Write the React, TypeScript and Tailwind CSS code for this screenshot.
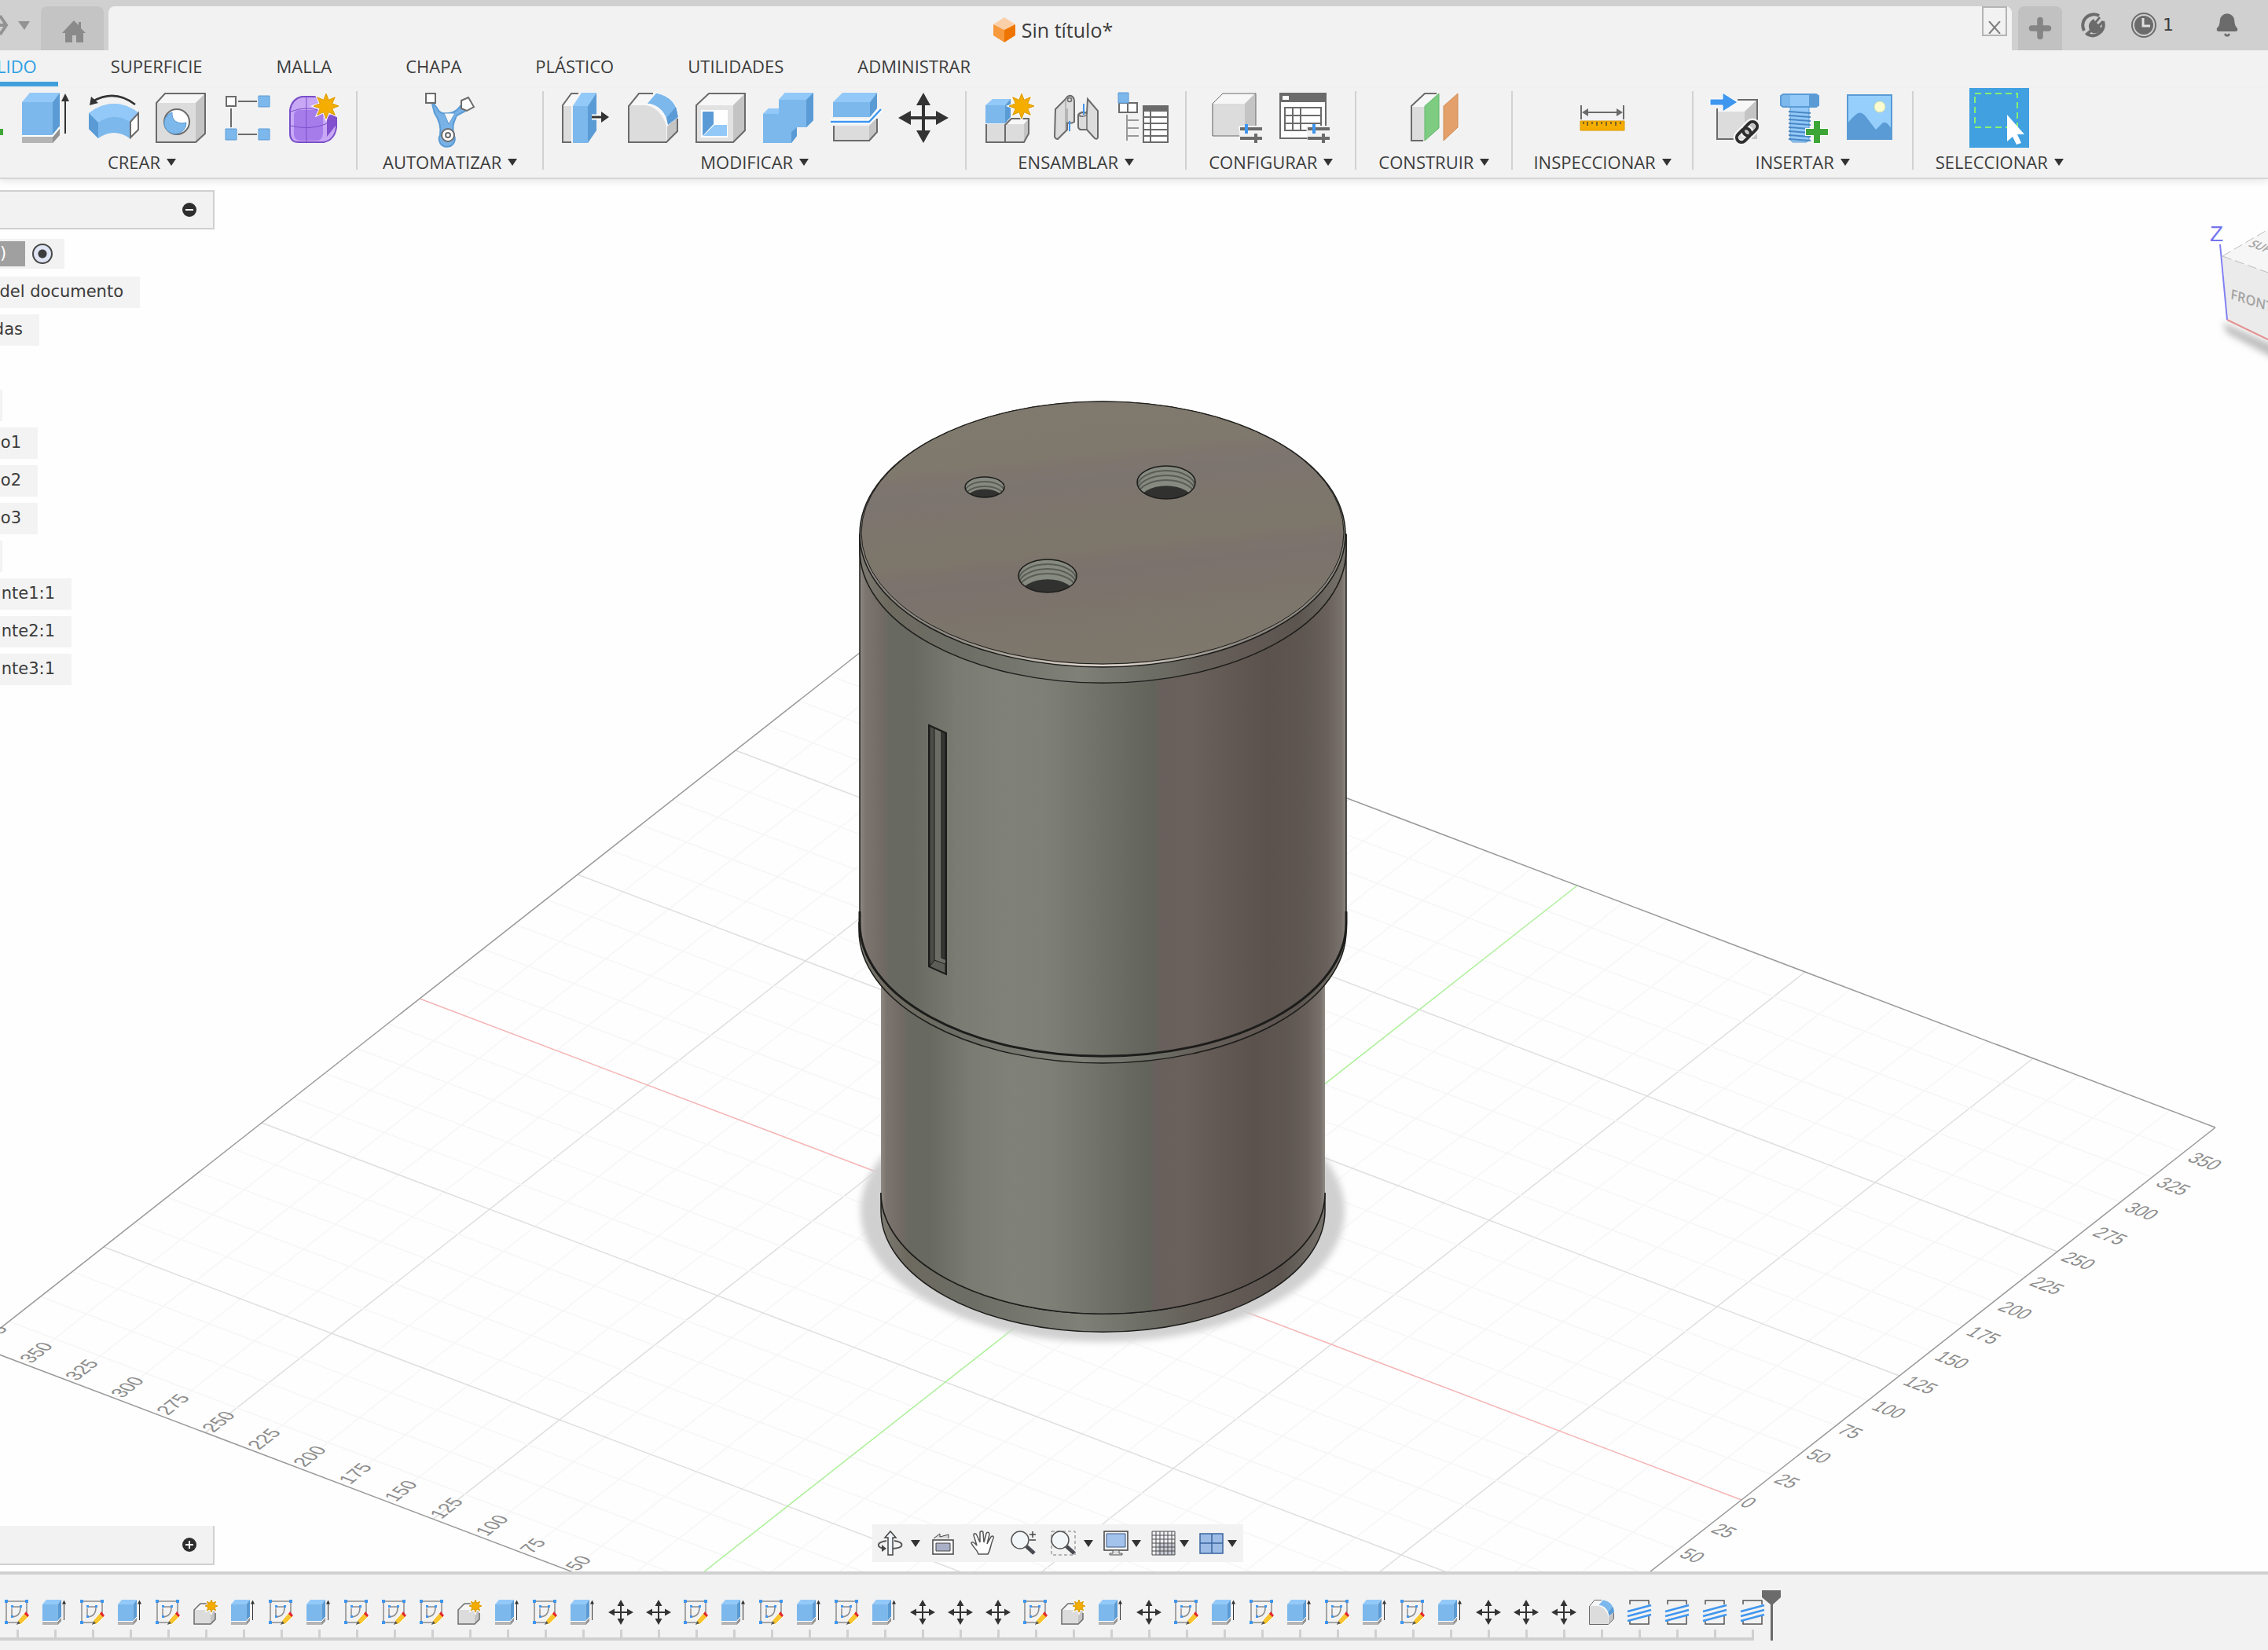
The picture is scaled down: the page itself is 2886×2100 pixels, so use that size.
import React from "react";
import { Bell, Plus } from "lucide-react";

type IconProps = { className?: string };

const BLUE = "#7cb8ec";
const BLUE_TOP = "#93c9f8";
const BLUE_SIDE = "#5a9bd5";
const LINE = "#6b6b6b";
const FACE = "#dcdcdc";
const FACE_TOP = "#f7f7f7";
const FACE_SIDE = "#c4c4c4";
const DARK = "#333333";

const starPoints = (cx: number, cy: number, outer: number, inner: number) =>
    Array.from({ length: 16 }, (_, i) => {
        const r = i % 2 === 0 ? outer : inner;
        const a = (Math.PI * i) / 8 - Math.PI / 2;
        return `${(cx + r * Math.cos(a)).toFixed(1)},${(cy + r * Math.sin(a)).toFixed(1)}`;
    }).join(" ");

const Svg: React.FC<IconProps & { size?: number; children: React.ReactNode }> = ({
    className = "h-16 w-16",
    size = 64,
    children
}) => (
    <svg className={`${className} shrink-0 overflow-visible`} viewBox={`0 0 ${size} ${size}`} fill="none" aria-hidden="true">
        {children}
    </svg>
);

const Star: React.FC<{ cx: number; cy: number; r?: number }> = ({ cx, cy, r = 16 }) => (
    <>
        <polygon points={starPoints(cx, cy, r, r * 0.52)} fill="#f5ad00" stroke="#f8f8f8" strokeWidth="3" />
        <polygon points={starPoints(cx, cy, r, r * 0.52)} fill="#f5ad00" stroke="#d99a00" strokeWidth="1" />
    </>
);

const ExtrudeIcon: React.FC<IconProps> = ({ className }) => (
    <Svg className={className}>
        <path d="M0 55h39l9-10v9l-9 10H0z" fill="#b5b5b5" />
        <path d="M39 55l9-10v9l-9 10z" fill="#929292" />
        <path d="M0 12h39v42H0z" fill={BLUE} />
        <path d="M0 12L10 0h38l-9 12z" fill={BLUE_TOP} />
        <path d="M39 12l9-12v43l-9 11z" fill={BLUE_SIDE} />
        <path d="M0 55h39l9-11" stroke="#fff" strokeWidth="2" />
        <path d="M55 8v44" stroke={DARK} strokeWidth="2" />
        <path d="M55 1l5 10H50z" fill={DARK} />
    </Svg>
);

const RevolveIcon = () => (
    <Svg>
        <path d="M0 26Q32 2 64 26L52 36v22Q32 44 12 58L0 46z" fill={BLUE} />
        <path d="M0 26Q32 2 64 26L52 37Q32 24 12 38z" fill={BLUE_TOP} />
        <path d="M0 26l12 12v20L0 46z" fill={BLUE_SIDE} />
        <path d="M53 37l10-11v21L53 57z" fill="#fff" stroke={LINE} strokeWidth="2" />
        <path d="M5 11Q33-5 59 15" stroke={DARK} strokeWidth="2.5" />
        <path d="M1 16L3 5l9 8z" fill={DARK} />
    </Svg>
);

const HoleIcon = () => (
    <Svg>
        <path d="M1 13L12 1h51v51L51 63H1z" fill={FACE} />
        <path d="M1 13L12 1h51L51 13z" fill={FACE_TOP} />
        <path d="M51 13L63 1v51L51 63z" fill={FACE_SIDE} />
        <path d="M1 13L12 1h51v51L51 63H1z" stroke={LINE} strokeWidth="2" />
        <circle cx="27" cy="37" r="16" fill="#fff" stroke={LINE} strokeWidth="2" />
        <path d="M21 25a14 14 0 1 0 18 13c-11 3-19-3-18-13z" fill={BLUE} stroke={BLUE_SIDE} />
    </Svg>
);

const PatternIcon = () => (
    <Svg>
        <path d="M20 11h24M11 20v24M20 53h24" stroke={LINE} strokeWidth="2" />
        <path d="M5 5h12v12H5z" fill="#fff" stroke={LINE} strokeWidth="2" />
        <path d="M46 4h14v14H46zM4 46h14v14H4zM46 46h14v14H46z" fill={BLUE} stroke={BLUE_SIDE} />
    </Svg>
);

const FormIcon = () => (
    <Svg>
        <path d="M1 22Q3 8 16 5h18L60 32v12Q58 60 44 63H12Q1 63 1 52z" fill="#c8a8f5" stroke="#7b4fc9" strokeWidth="2" />
        <path d="M6 28q1-6 7-6h23q7 0 7 6v24q-1 9-8 9H14q-8-1-8-8z" fill="#a67ceb" />
        <path d="M48 30l11-4v16l-11 14z" fill="#8350cf" />
        <path d="M22 6Q21 34 22 62M2 42q24 6 44-2l14-9M2 24q20-8 40 0" stroke="#7b4fc9" />
        <Star cx={47} cy={17} />
    </Svg>
);

const AutomateIcon = () => (
    <Svg>
        <path d="M8 10l6 8c2 3 3 7 8 8 10 2 18-2 22-8l8-8 6 8-8 6-10 5c-3 8-7 14-3 26a10 10 0 1 1-18-1c2-12-3-22-7-28z" fill="#78b2e6" stroke={BLUE_SIDE} strokeWidth="2" />
        <path d="M24 26h14l-8 14z" fill="#f7f7f7" stroke={BLUE_SIDE} />
        <path d="M1 1h12v12H1z" fill="#fff" stroke={LINE} strokeWidth="2" />
        <path d="M46 10l9-4 7 12-9 5-7-3z" fill="#fff" stroke={LINE} strokeWidth="2" />
        <circle cx="29" cy="54" r="8" fill="#fff" stroke={LINE} strokeWidth="2" />
        <circle cx="29" cy="54" r="3" stroke={LINE} strokeWidth="2" />
    </Svg>
);

const PressPullIcon = () => (
    <Svg>
        <path d="M3 16L14 1h12L15 16v47H3z" fill={FACE_TOP} />
        <path d="M3 17h11v46H3z" fill={FACE} />
        <path d="M14 63H3V16L14 1h9" stroke={LINE} strokeWidth="2" />
        <path d="M16 17h19v47H16z" fill={BLUE} />
        <path d="M16 17L27 0h19L35 17z" fill={BLUE_TOP} />
        <path d="M35 17L46 0v48L35 64z" fill={BLUE_SIDE} />
        <path d="M40 31h14" stroke="#fff" strokeWidth="7" />
        <path d="M40 31h16" stroke={DARK} strokeWidth="3" />
        <path d="M52 24l10 7-10 7z" fill={DARK} />
    </Svg>
);

const FilletIcon: React.FC<IconProps> = ({ className }) => (
    <Svg className={className}>
        <path d="M1 17L14 1h20l28 31v18L49 63H1z" fill={FACE_TOP} />
        <path d="M1 16h22c14 2 24 16 26 28v19H1z" fill={FACE} />
        <path d="M50 43l13-13v19L50 62z" fill={FACE_SIDE} />
        <path d="M32 1H14L1 17v46h48l14-14V33" stroke={LINE} strokeWidth="2" />
        <path d="M36 0q27 6 28 31L51 41Q46 16 24 14z" fill={BLUE} stroke="#fff" strokeWidth="1" />
        <path d="M61 18l3 13-13 10-2-9z" fill={BLUE_SIDE} />
    </Svg>
);

const ShellIcon = () => (
    <Svg>
        <path d="M1 16L17 1h46v47L48 63H1z" fill="#e2e2e2" />
        <path d="M1 16L17 1h46L48 16z" fill={FACE_TOP} />
        <path d="M48 16L63 1v47L48 63z" fill={FACE_SIDE} />
        <path d="M1 16L17 1h46v47L48 63H1z" stroke={LINE} strokeWidth="2" />
        <path d="M7 22h34v35H7z" fill="#fff" />
        <path d="M9 24h14v16L9 55z" fill={BLUE_SIDE} />
        <path d="M24 41h16v14H10z" fill={BLUE_TOP} />
    </Svg>
);

const CombineIcon = () => (
    <Svg>
        <path d="M0 27L7 20h13V9l8-9h36v35l-9 9H43v11l-7 9H0z" fill={BLUE} />
        <path d="M20 9l8-9h36l-9 9zM0 27l7-7h13v7z" fill={BLUE_TOP} />
        <path d="M55 9l9-9v35l-9 9zM36 50l7-6v11l-7 9z" fill={BLUE_SIDE} />
    </Svg>
);

const SplitIcon = () => (
    <Svg>
        <path d="M3 12h47v19H3z" fill={BLUE} />
        <path d="M3 12L15 0h44l-9 12z" fill={BLUE_TOP} />
        <path d="M50 12l9-12v20l-9 11z" fill={BLUE_SIDE} />
        <path d="M4 42h45l9-9v17l-9 11H4z" fill={FACE} />
        <path d="M49 42l9-9v17l-9 11z" fill={FACE_SIDE} />
        <path d="M4 42v19h45l10-11V33" stroke={LINE} strokeWidth="2" />
        <path d="M0 37h49l15-16" stroke="#fff" strokeWidth="6" />
        <path d="M0 37h49l15-16" stroke="#3f96ef" strokeWidth="2.5" />
    </Svg>
);

const MoveIcon: React.FC<IconProps> = ({ className }) => (
    <Svg className={className}>
        <path d="M32 10v44M10 32h44" stroke={DARK} strokeWidth="4" />
        <path d="M32 0l9 16H23zM32 64l9-16H23zM0 32l16-9v18zM64 32l-16-9v18z" fill={DARK} />
    </Svg>
);

const ComponentIcon = () => (
    <Svg>
        <path d="M4 40h48l6-7v19l-6 11H4z" fill={FACE} />
        <path d="M28 40l7-7h23l-6 7z" fill={FACE_TOP} />
        <path d="M52 40l6-7v19l-6 11z" fill={FACE_SIDE} />
        <path d="M4 40v23h48l6-11V33H36l-8 8v22" stroke={LINE} strokeWidth="2" />
        <path d="M3 16h25v23H3z" fill={BLUE} />
        <path d="M3 16l9-8h24l-8 8z" fill={BLUE_TOP} />
        <path d="M28 16l7-8v23l-7 8z" fill={BLUE_SIDE} />
        <Star cx={49} cy={17} />
    </Svg>
);

const JointIcon = () => (
    <Svg>
        <path d="M6 21L19 8q3-5 7-4 4 2 4 7v26q-4 3-9 1v9L9 59q-3 0-4-3z" fill={FACE} stroke={LINE} strokeWidth="2" />
        <path d="M19 9v38M21 38V20" stroke="#a8a8a8" strokeWidth="1.5" />
        <circle cx="24" cy="9" r="2.5" stroke={LINE} strokeWidth="1.5" />
        <path d="M47 8l13 15v34q-1 3-4 1L46 47H38q-3-1-3-4V28q4-5 11-2z" fill={FACE} stroke={LINE} strokeWidth="2" />
        <path d="M46 26v21M36 29q5 3 10-1" stroke={LINE} strokeWidth="1.5" />
        <path d="M24 36v13M42 14v14" stroke="#3f96ef" strokeWidth="2" />
    </Svg>
);

const BomIcon = () => (
    <Svg>
        <path d="M1 13h23v12H1zM12 13v12" fill="#fff" stroke={LINE} strokeWidth="2" />
        <path d="M0 0h13v13H0z" fill={BLUE} stroke={BLUE_SIDE} />
        <path d="M11 28v33M11 35h15M11 45h15M11 55h15" stroke="#999" strokeWidth="2" />
        <path d="M32 17h31v46H32z" fill="#fff" stroke={LINE} strokeWidth="2" />
        <path d="M31 16h33v8H31z" fill={LINE} />
        <path d="M41 24v39M32 31h31M32 39h31M32 47h31M32 55h31" stroke={LINE} strokeWidth="2" />
    </Svg>
);

const Sliders = () => (
    <>
        <path d="M34 42h30v22H36z" fill="#f2f2f2" />
        <path d="M36 46h28M36 58h28M56 52v12" stroke={LINE} strokeWidth="4" />
        <path d="M44 40v12" stroke="#3f96ef" strokeWidth="4" />
    </>
);

const ConfigureIcon = () => (
    <Svg>
        <path d="M0 14L14 0h42v42L42 55H0z" fill={FACE} />
        <path d="M0 14L14 0h42L42 14z" fill={FACE_TOP} />
        <path d="M42 14L56 0v55H42z" fill={FACE_SIDE} />
        <path d="M36 55H1V14L14 1h42v41" stroke={LINE} />
        <Sliders />
    </Svg>
);

const ConfigTableIcon = () => (
    <Svg>
        <path d="M1 1h58v57H1z" fill="#fff" stroke={LINE} strokeWidth="2" />
        <path d="M0 0h60v12H0z" fill={LINE} />
        <path d="M4 4h8v5H4z" fill="#fff" />
        <path d="M7 19h46v29H7zM17 19v29M27 19v29M7 29h46M7 39h46" stroke={LINE} strokeWidth="2" />
        <Sliders />
    </Svg>
);

const ConstructIcon = () => (
    <Svg>
        <path d="M3 18L20 1h16L20 18v42H3z" fill={FACE_TOP} />
        <path d="M3 18h17v43H3z" fill={FACE} />
        <path d="M18 61H3V17L20 1h15" stroke={LINE} strokeWidth="2" />
        <path d="M20 17L38 1v44L20 61z" fill="#7dcc82" stroke="#62b96a" />
        <path d="M44 17L62 1v43L44 61z" fill="#e3a06a" stroke="#cf8d58" />
    </Svg>
);

const MeasureIcon = () => (
    <Svg>
        <path d="M5 16v18M59 16v18M10 25h44" stroke={LINE} strokeWidth="2" />
        <path d="M6 25l8-5v10zM58 25l-8-5v10z" fill={LINE} />
        <path d="M4 36h56v12H4z" fill="#f5ad00" stroke="#d99a00" />
        <path d="M8 37v3M13 37v5M19 37v3M25 37v5M31 37v3M37 37v5M43 37v3M49 37v5M55 37v3" stroke="#7d6420" strokeWidth="2" />
    </Svg>
);

const InsertIcon = () => (
    <Svg>
        <path d="M9 24L24 9h36v36L44 59H9z" fill={FACE} />
        <path d="M9 24L24 9h36L44 24z" fill={FACE_TOP} />
        <path d="M44 24L60 9v50H44z" fill={FACE_SIDE} />
        <path d="M60 38V9H35M9 20v39h23" stroke={LINE} strokeWidth="2" />
        <path d="M0 8h16V0l19 12-19 12v-8H0z" fill="#3f96ef" stroke="#fff" />
        <g transform="rotate(-45 47 50)">
            <path d="M30 50a7 7 0 0 1 7-7h8a7 7 0 0 1 0 14h-8a7 7 0 0 1-7-7zM42 50a7 7 0 0 1 7-7h8a7 7 0 0 1 0 14h-8a7 7 0 0 1-7-7z" stroke="#f2f2f2" strokeWidth="7" />
            <path d="M31 50a6 6 0 0 1 6-6h8a6 6 0 0 1 0 12h-8a6 6 0 0 1-6-6zM43 50a6 6 0 0 1 6-6h8a6 6 0 0 1 0 12h-8a6 6 0 0 1-6-6z" stroke="#2d2d2d" strokeWidth="4" />
        </g>
    </Svg>
);

const BoltIcon = () => (
    <Svg>
        <path d="M16 18h24v42l-3 3H19l-3-3z" fill={BLUE_TOP} stroke={BLUE_SIDE} />
        <path d="M4 4l3-2h42l3 2v12l-3 2H7l-3-2z" fill={BLUE} stroke={BLUE_SIDE} strokeWidth="2" />
        <path d="M16 3h24v14H16z" fill={BLUE_TOP} />
        <path d="M40 3h9l3 2v11l-3 1h-9z" fill={BLUE_SIDE} />
        {[24, 29, 34, 39, 44, 49, 54, 59].map((y) => (
            <path key={y} d={`M14 ${y}l28 2`} stroke="#4887c4" strokeWidth="2" />
        ))}
        <path d="M45 35h10v10h10v10H55v10H45V55H35V45h10z" fill="#fff" />
        <path d="M46 36h8v10h10v8H54v10h-8V54H36v-8h10z" fill="#3da637" />
    </Svg>
);

const ImageIcon = () => (
    <Svg>
        <path d="M2 2h58v58H2z" fill="#96cffc" />
        <path d="M2 40q8-10 14-14c5-2 9 2 13 8l10 13 8-8c4-3 7 0 13 8v13H2z" fill={BLUE_SIDE} />
        <circle cx="44" cy="18" r="7" fill="#fdfcd0" stroke="#c9dcae" />
        <path d="M3 3h56v56H3z" stroke={BLUE_SIDE} strokeWidth="2" />
    </Svg>
);

const SelectIcon = () => (
    <Svg>
        <path d="M1 1h54v43H1z" stroke="#86f072" strokeWidth="2" strokeDasharray="8 5" />
        <path d="M42 28v34l7-6 5 10 6-2-5-11h9z" fill="#fff" />
    </Svg>
);

const SketchIcon: React.FC<IconProps> = ({ className }) => (
    <Svg className={className} size={32}>
        <path d="M4 2h22M4 29h14M2 4v24M28 4v13" stroke="#8c8c8c" strokeWidth="1.5" />
        <path d="M10 9h10M9 11v10M20 10q0 11-10 12" stroke="#8c8c8c" strokeWidth="1.5" />
        <path d="M0 0h4v4H0zM26 0h4v4h-4zM0 27h4v4H0zM8 7h3v3H8zM19 7h3v3h-3zM8 20h3v3H8z" fill="#3f96ef" />
        <path d="M26 16l5 5-10 10-5 1 1-6z" fill="#f8c530" stroke="#fff" />
        <path d="M27 15l4 5-2 2-4-4z" fill="#e2262f" />
        <path d="M17 27l3 3-5 2z" fill="#555" />
    </Svg>
);

const BodyIcon: React.FC<IconProps> = ({ className }) => (
    <Svg className={className} size={32}>
        <path d="M1 13l8-8h15l4 6v14l-6 6H1z" fill={FACE_TOP} />
        <path d="M1 13h21v18H1z" fill={FACE} />
        <path d="M22 13l6-4v16l-6 6z" fill={FACE_SIDE} />
        <path d="M18 5H9l-8 8v18h21l6-6v-8" stroke={LINE} strokeWidth="1.5" />
        <Star cx={23} cy={8} r={8} />
    </Svg>
);

const ThreadIcon: React.FC<IconProps> = ({ className }) => (
    <Svg className={className} size={32}>
        <path d="M4 6V1h24v5M4 27v4h24V19" stroke="#555" strokeWidth="1.5" />
        <path d="M1 15L31 7M1 21l30-8M1 27l30-8" stroke="#3f96ef" strokeWidth="2.5" />
    </Svg>
);

const Caret: React.FC<IconProps> = ({ className = "h-[9px] w-3" }) => (
    <svg className={`${className} shrink-0`} viewBox="0 0 12 9" fill={DARK} aria-hidden="true">
        <path d="M0 0h12L6 9z" />
    </svg>
);

const TabStrip = () => (
    <header className="flex h-16 items-stretch bg-[#d0d0d0] pt-2">
        <div className="flex w-[52px] items-center gap-3 pb-2">
            <svg className="h-7 w-[11px]" viewBox="0 0 11 28" fill="none" stroke="#939393" strokeWidth="4" aria-hidden="true">
                <path d="M0 2l8 12-8 12M0 14h7" />
            </svg>
            <svg className="h-[11px] w-[15px]" viewBox="0 0 15 11" fill="#929292" aria-hidden="true">
                <path d="M0 0h15L8 11z" />
            </svg>
        </div>
        <button aria-label="Inicio" className="mr-1.5 flex w-20 items-center justify-center rounded-t-lg bg-[#c4c4c4] pt-2 pl-1">
            <svg className="h-7 w-[30px]" viewBox="0 0 30 28" fill="#8a8a8a" aria-hidden="true">
                <path d="M15 0l6 6V2h3v8l6 6h-3v12h-9v-9h-5v9H4V16H0z" />
            </svg>
        </button>
        <div className="flex flex-1 items-start rounded-t-lg bg-[#f2f2f2]">
            <div className="flex flex-1 items-center justify-center gap-2 pt-3.5 pl-5">
                <svg className="h-8 w-7" viewBox="0 0 28 32" aria-hidden="true">
                    <path d="M14 0l14 9-14 7L0 9z" fill="#fbd0a8" />
                    <path d="M0 9l14 7v16L0 23z" fill="#f79a3e" />
                    <path d="M28 9l-14 7v16l14-9z" fill="#ee7600" />
                </svg>
                <span className="text-[25px] leading-8 text-[#3c3c3c]">Sin título*</span>
            </div>
            <button aria-label="Cerrar" className="mr-1.5 flex h-[38px] w-8 items-end justify-center border-2 border-[#b4b4b4] bg-[#f2f2f2] pb-px">
                <svg className="h-4 w-4" viewBox="0 0 16 16" fill="none" stroke="#7d7d7d" strokeWidth="2" aria-hidden="true">
                    <path d="M1 0l14 16M15 0L1 16" />
                </svg>
            </button>
        </div>
        <button aria-label="Nuevo diseño" className="ml-2 flex w-14 items-center justify-center rounded-t-lg bg-[#c1c1c1]">
            <Plus className="h-9 w-9 text-[#858585]" strokeWidth={5} />
        </button>
        <div className="flex w-[262px] items-start pt-2">
            <button aria-label="Extensiones" className="ml-6">
                <svg className="h-8 w-8" viewBox="0 0 32 32" fill="none" aria-hidden="true">
                    <path d="M23 4A14 14 0 0 0 4 23M9 28A14 14 0 0 0 28 11" stroke="#6b6b6b" strokeWidth="4" />
                    <path d="M5 27l6-5c-3-7 1-11 5-14l2 3 5-6 2 2-5 6 2 2 5-5 2 2-5 6 3 2c-4 6-10 8-14 5l-5 5z" fill="#6b6b6b" />
                </svg>
            </button>
            <button className="ml-8 flex items-center gap-2 font-['DejaVu_Sans',sans-serif] leading-8 text-[#3c3c3c]">
                <svg className="h-8 w-8" viewBox="0 0 32 32" fill="none" aria-hidden="true">
                    <circle cx="16" cy="16" r="15" stroke="#6b6b6b" strokeWidth="2" />
                    <circle cx="16" cy="16" r="12" fill="#6b6b6b" />
                    <path d="M15 7v10h9" stroke="#e0e0e0" strokeWidth="3" />
                </svg>
                1
            </button>
            <button aria-label="Notificaciones" className="ml-auto mr-9">
                <Bell className="h-8 w-8 text-[#6b6b6b]" fill="currentColor" />
            </button>
        </div>
    </header>
);

const MENU = ["LIDO", "SUPERFICIE", "MALLA", "CHAPA", "PLÁSTICO", "UTILIDADES", "ADMINISTRAR"];

const MenuTabs = () => (
    <nav className="-ml-1 flex h-12 items-start gap-10 bg-[#f2f2f2] pt-1.5">
        {MENU.map((name, i) => (
            <button
                key={name}
                className={`border-b-[6px] pr-[27px] pb-1.5 leading-7 ${
                    i === 0 ? "border-[#41a0dc] text-[#2d9fe3]" : "border-transparent pl-[27px]"
                }`}
            >
                {name}
            </button>
        ))}
    </nav>
);

interface ToolGroupProps {
    label: string;
    labelClass?: string;
    children: React.ReactNode;
}

const ToolGroup: React.FC<ToolGroupProps> = ({ label, labelClass = "px-7", children }) => (
    <>
        <section className="flex shrink-0 flex-col items-center gap-1">
            <div className="flex h-[76px] items-center gap-[22px] px-[21px]">
                {React.Children.map(children, (icon) => (
                    <button aria-label={label}>{icon}</button>
                ))}
            </div>
            <button className={`flex items-center gap-2 leading-7 ${labelClass}`}>
                {label}
                <Caret />
            </button>
        </section>
        <span className="my-1 w-0.5 shrink-0 bg-[#d2d2d2] last:hidden" />
    </>
);

const Toolbar = () => (
    <div className="relative z-10 flex items-stretch border-b-2 border-[#d6d6d6] bg-[#f2f2f2] pb-1.5 shadow-[0_4px_8px_rgba(0,0,0,0.08)]">
        <section className="flex w-[453px] shrink-0 flex-col items-center gap-1">
            <div className="flex h-[76px] w-full items-center gap-[21px]">
                <button aria-label="Boceto" className="-mr-[17px] w-6">
                    <svg className="h-16 w-1" viewBox="0 0 4 64" fill="#3da637" aria-hidden="true">
                        <path d="M0 46h4v8H0z" />
                    </svg>
                </button>
                <button aria-label="Extruir"><ExtrudeIcon /></button>
                <button aria-label="Revolución"><RevolveIcon /></button>
                <button aria-label="Agujero"><HoleIcon /></button>
                <button aria-label="Patrón"><PatternIcon /></button>
                <button aria-label="Crear forma"><FormIcon /></button>
            </div>
            <button className="mr-[92px] flex items-center gap-2 leading-7">
                CREAR
                <Caret />
            </button>
        </section>
        <span className="my-1 w-0.5 shrink-0 bg-[#d2d2d2]" />
        <ToolGroup label="AUTOMATIZAR" labelClass="px-8">
            <AutomateIcon />
        </ToolGroup>
        <ToolGroup label="MODIFICAR">
            <PressPullIcon />
            <FilletIcon />
            <ShellIcon />
            <CombineIcon />
            <SplitIcon />
            <MoveIcon />
        </ToolGroup>
        <ToolGroup label="ENSAMBLAR">
            <ComponentIcon />
            <JointIcon />
            <BomIcon />
        </ToolGroup>
        <ToolGroup label="CONFIGURAR">
            <ConfigureIcon />
            <ConfigTableIcon />
        </ToolGroup>
        <ToolGroup label="CONSTRUIR">
            <ConstructIcon />
        </ToolGroup>
        <ToolGroup label="INSPECCIONAR" labelClass="px-[26px]">
            <MeasureIcon />
        </ToolGroup>
        <ToolGroup label="INSERTAR">
            <InsertIcon />
            <BoltIcon />
            <ImageIcon />
        </ToolGroup>
        <ToolGroup label="SELECCIONAR">
            <span className="flex h-[76px] w-[76px] items-center justify-center bg-[#41a0e0]">
                <SelectIcon />
            </span>
        </ToolGroup>
    </div>
);

// Ground plane: the view is orthographic, so each axis is one screen vector per 125 mm.
const ORIGIN = [1404, 1601];
const AXIS_X = [290, 110];
const AXIS_Y = [201, -158];

const project = (x: number, y: number) => [
    ORIGIN[0] + (x / 125) * AXIS_X[0] + (y / 125) * AXIS_Y[0],
    ORIGIN[1] + (x / 125) * AXIS_X[1] + (y / 125) * AXIS_Y[1]
];

const GroundLine: React.FC<{ from: number[]; to: number[]; stroke: string; width?: number }> = ({ from, to, stroke, width = 1.5 }) => {
    const [x1, y1] = project(from[0], from[1]);
    const [x2, y2] = project(to[0], to[1]);
    return <line x1={x1} y1={y1} x2={x2} y2={y2} stroke={stroke} strokeWidth={width} />;
};

const range = (from: number, to: number, step: number) =>
    Array.from({ length: Math.floor((to - from) / step) + 1 }, (_, i) => from + i * step);

const lineColor = (v: number) => (v % 125 === 0 ? "#dfdfdf" : "#f6f6f6");

const EDGE = "#999999";

const Ground = () => (
    <g>
        {range(-350, 325, 25).filter((v) => v !== 0).map((v) => (
            <GroundLine key={`x${v}`} from={[v, -350]} to={[v, 375]} stroke={lineColor(v)} />
        ))}
        {range(-325, 350, 25).filter((v) => v !== 0).map((v) => (
            <GroundLine key={`y${v}`} from={[-375, v]} to={[350, v]} stroke={lineColor(v)} />
        ))}
        <GroundLine from={[-375, 0]} to={[350, 0]} stroke="#f5b5b5" />
        <GroundLine from={[0, -350]} to={[0, 375]} stroke="#aef09a" />
        <GroundLine from={[-375, -350]} to={[-375, 375]} stroke={EDGE} />
        <GroundLine from={[-375, 375]} to={[350, 375]} stroke={EDGE} />
        <GroundLine from={[350, -350]} to={[350, 375]} stroke={EDGE} />
        <GroundLine from={[-375, -350]} to={[350, -350]} stroke={EDGE} />
        <g fill="#8c8c8c" fontFamily="'Liberation Sans', Arial, sans-serif" fontSize="22" textAnchor="middle">
            {range(-50, 350, 25).map((v) => {
                const [x, y] = project(350, v);
                const label = String(Math.abs(v));
                return (
                    <text key={v} transform={`translate(${x + 9 * label.length - 7} ${y + 4 * label.length + 5}) rotate(21) skewX(-31)`}>
                        {label}
                    </text>
                );
            })}
            {range(-375, -50, 25).map((v) => {
                const [x, y] = project(v, -350);
                const label = String(Math.abs(v));
                return (
                    <text key={v} transform={`translate(${x + 6 * label.length + 7} ${y - 4 * label.length + 1}) rotate(-38) skewX(31)`}>
                        {label}
                    </text>
                );
            })}
        </g>
    </g>
);

const ThreadedHole: React.FC<{ cx: number; cy: number; rx: number; ry: number; id: string }> = ({ cx, cy, rx, ry, id }) => (
    <g>
        <clipPath id={id}>
            <ellipse cx={cx} cy={cy} rx={rx} ry={ry} />
        </clipPath>
        <g clipPath={`url(#${id})`}>
            <ellipse cx={cx} cy={cy} rx={rx} ry={ry} fill="#868a81" />
            {[6, 12, 18].map((d) => (
                <ellipse key={d} cx={cx} cy={cy + d} rx={rx} ry={ry} fill="none" stroke="#5a5d55" strokeWidth="2" />
            ))}
            <ellipse cx={cx} cy={cy + ry * 1.2} rx={rx * 0.95} ry={ry} fill="#31322f" />
        </g>
        <ellipse cx={cx} cy={cy} rx={rx} ry={ry} fill="none" stroke="#1c1c1a" strokeWidth="1.5" />
    </g>
);

const BODY_STOPS: [number, string][] = [
    [0, "#8f8a83"],
    [0.012, "#7c746f"],
    [0.048, "#716964"],
    [0.06, "#686a62"],
    [0.11, "#686a62"],
    [0.2, "#7a7c74"],
    [0.3, "#80827a"],
    [0.38, "#7e8078"],
    [0.47, "#73756d"],
    [0.56, "#676961"],
    [0.605, "#62645c"],
    [0.615, "#68605c"],
    [0.68, "#6a605c"],
    [0.77, "#615753"],
    [0.84, "#5b524e"],
    [0.92, "#5f5752"],
    [0.96, "#69605c"],
    [0.99, "#78706b"],
    [1, "#8f8a83"]
];

const Model = () => (
    <g>
        <defs>
            <linearGradient id="body">
                {BODY_STOPS.map(([at, color]) => (
                    <stop key={at} offset={at} stopColor={color} />
                ))}
            </linearGradient>
            <linearGradient id="rim">
                <stop offset="0" stopColor="#7d7a72" />
                <stop offset="0.06" stopColor="#6d695f" />
                <stop offset="0.2" stopColor="#6c6e66" />
                <stop offset="0.45" stopColor="#7f8178" />
                <stop offset="0.6" stopColor="#6c6e66" />
                <stop offset="0.7" stopColor="#66605a" />
                <stop offset="0.8" stopColor="#625955" />
                <stop offset="0.9" stopColor="#5b544f" />
                <stop offset="1" stopColor="#77736c" />
            </linearGradient>
            <linearGradient id="glint">
                <stop offset="0.15" stopColor="#c9bfb6" stopOpacity="0" />
                <stop offset="0.45" stopColor="#e0d6cd" />
                <stop offset="0.55" stopColor="#e0d6cd" />
                <stop offset="0.8" stopColor="#c9bfb6" stopOpacity="0" />
            </linearGradient>
            <linearGradient id="face" x1="0.4" y1="0" x2="0.6" y2="1">
                <stop offset="0" stopColor="#80796e" />
                <stop offset="0.2" stopColor="#7f786d" />
                <stop offset="0.3" stopColor="#7c746f" />
                <stop offset="0.42" stopColor="#7d766c" />
                <stop offset="0.55" stopColor="#7d766b" />
                <stop offset="0.64" stopColor="#7b726d" />
                <stop offset="0.78" stopColor="#7c756b" />
                <stop offset="1" stopColor="#7e776c" />
            </linearGradient>
            <filter id="soft" x="-10%" y="-10%" width="120%" height="120%">
                <feGaussianBlur stdDeviation="4" />
            </filter>
        </defs>
        <ellipse cx="1403" cy="1541" rx="308" ry="167" fill="#d0d0d0" filter="url(#soft)" />
        <g stroke="#1c1c1a" strokeWidth="1.5">
            <path d="M1121 1518a282 154 0 0 0 565 0v23a282 154 0 0 1-565 0z" fill="url(#rim)" />
            <path d="M1121 1184h565v334a282 154 0 0 1-565 0z" fill="url(#body)" strokeWidth="0" />
            <path d="M1121 1518a282 154 0 0 0 565 0" fill="none" />
            <path d="M1093 1174v10a310 169 0 0 0 620 0v-10z" fill="url(#rim)" />
            <path d="M1094 680h619v495a309 169 0 0 1-619 0z" fill="url(#body)" strokeWidth="0" />
            <path d="M1094 680v485M1713 680v485" />
            <path d="M1094 1160v15a309 169 0 0 0 619 0v-15" fill="none" strokeWidth="3" />
            <path d="M1094 680v20a309 169 0 0 0 619 0v-20z" fill="url(#rim)" />
            <ellipse cx="1403" cy="680" rx="309" ry="169" fill="#8b8780" />
            <ellipse cx="1403" cy="678" rx="307" ry="167" fill="url(#face)" strokeWidth="1" />
        </g>
        <path d="M1095 680a308 167 0 0 0 616 0" stroke="url(#glint)" strokeWidth="2" />
        <ThreadedHole id="hole-s" cx={1253} cy={620} rx={25} ry={13} />
        <ThreadedHole id="hole-r" cx={1484} cy={614} rx={37} ry={21} />
        <ThreadedHole id="hole-f" cx={1333} cy={733} rx={37} ry={21} />
        <path d="M1182 923l22 10v307l-22-10z" fill="#6b6d65" stroke="#1c1c1a" strokeWidth="2" />
        <path d="M1183 924l6 3v296l-6 6z" fill="#4c4d48" stroke="#1c1c1a" />
        <path d="M1198 931l5 2v288l-5-2z" fill="#353632" stroke="#1c1c1a" />
        <path d="M1183 1230l6-8 14 5v12z" fill="#5c5d56" stroke="#1c1c1a" />
    </g>
);

const ViewCube = () => (
    <g>
        <path d="M2828 410l80 36v18l-74-40z" fill="#bdbdbd" filter="url(#soft)" />
        <path d="M2828 326l72-42v68z" fill="#f6f6f6" />
        <path d="M2828 326l72 26v87l-66-32z" fill="#ebebeb" />
        <path d="M2828 326l72-42M2828 326l72 26" stroke="#bcbcbc" strokeDasharray="12 5" />
        <path d="M2825 311l9 96" stroke="#7f7ff2" strokeWidth="2" />
        <path d="M2834 407l66 32" stroke="#e59090" strokeWidth="2" />
        <g fill="#a3a3a3" fontFamily="'Open Sans', sans-serif" fontWeight="600">
            <text fontSize="17" transform="translate(2838 380) rotate(18) skewX(12)">FRONTAL</text>
            <text fontSize="14" transform="translate(2860 313) rotate(19) skewX(-30)">SUPERIOR</text>
        </g>
        <text x="2812" y="307" fill="#7474f0" fontFamily="'Liberation Sans', Arial, sans-serif" fontSize="28">Z</text>
    </g>
);

const TREE = [
    { text: "del documento", width: "w-[178px]" },
    { text: "das", width: "w-[50px]" },
    { text: "", width: "w-0" },
    { text: "", width: "w-[3px]" },
    { text: "o1", width: "w-12" },
    { text: "o2", width: "w-12" },
    { text: "o3", width: "w-12" },
    { text: "", width: "w-[3px]" },
    { text: "nte1:1", width: "w-[91px]" },
    { text: "nte2:1", width: "w-[91px]" },
    { text: "nte3:1", width: "w-[91px]" }
];

const RoundToggle: React.FC<{ plus?: boolean }> = ({ plus }) => (
    <svg className="h-[18px] w-[18px]" viewBox="0 0 18 18" aria-hidden="true">
        <circle cx="9" cy="9" r="9" fill="#2e2e2e" />
        <path d={plus ? "M4 9h10M9 4v10" : "M4 9h10"} stroke="#fff" strokeWidth="2" />
    </svg>
);

const Browser = () => (
    <aside className="relative w-[273px] pt-3.5 font-['DejaVu_Sans',sans-serif] text-[21px] text-[#3c3c3c]">
        <div className="flex h-[50px] items-center justify-end border-2 border-l-0 border-[#d0d0d0] bg-[#f2f2f2] pr-[21px]">
            <button aria-label="Contraer"><RoundToggle /></button>
        </div>
        <div className="mt-3 flex h-[38px] w-[82px] items-center bg-[#f2f2f2]">
            <span className="flex h-8 w-8 items-center bg-[#a0a0a0] text-white">)</span>
            <input
                type="radio"
                defaultChecked
                aria-label="Activar componente"
                className="ml-[9px] h-[26px] w-[26px] appearance-none rounded-full border-2 border-[#484848] bg-[radial-gradient(circle,#3c3c3c_5px,#dfe5f4_6px)]"
            />
        </div>
        <ul className="mt-2.5 flex flex-col gap-2">
            {TREE.map((row, i) => (
                <li key={i} className={`flex h-10 items-center justify-end bg-[#f3f3f3] whitespace-nowrap ${row.width} ${row.text ? "pr-[21px]" : ""}`}>
                    {row.text}
                </li>
            ))}
        </ul>
    </aside>
);

interface NavIconProps {
    label: string;
    caretGap?: string;
    children: React.ReactNode;
}

const NavIcon: React.FC<NavIconProps> = ({ label, caretGap, children }) => (
    <button aria-label={label} className={`flex items-center ${caretGap ?? "pr-1.5"}`}>
        <Svg className="h-8 w-8" size={32}>{children}</Svg>
        {caretGap && <Caret className="h-[9px] w-3" />}
    </button>
);

const Lens = () => (
    <>
        <path d="M20 20l10 9" stroke="#4a4a52" strokeWidth="5" />
        <circle cx="12" cy="12" r="11" fill="#f2f6f8" stroke="#555" strokeWidth="1.5" />
    </>
);

const NavBar = () => (
    <div className="absolute bottom-3 left-[1110px] flex h-12 items-center gap-[13px] bg-[#f2f2f2] pr-2 pl-[7px]">
        <NavIcon label="Órbita" caretGap="gap-2.5">
            <path d="M13 31V9H9l7-8 7 8h-4v22z" fill="#f0f4fb" stroke="#444" strokeWidth="1.5" />
            <path d="M11 13C-2 15-2 21 8 23M21 13c13 2 13 9-2 10" stroke="#555" strokeWidth="2" />
            <path d="M5 18l6 5-6 4z" fill="#444" />
        </NavIcon>
        <NavIcon label="Mirar a">
            <path d="M3 12h26v18H3z" fill="#fff" stroke="#444" strokeWidth="1.5" />
            <path d="M7 16h18v10H7z" fill="#a9afc6" stroke="#444" />
            <path d="M4 10l8-6v4l11-3v5" fill="#d8d8d8" stroke="#444" />
        </NavIcon>
        <NavIcon label="Encuadre">
            <path d="M10 30c-1-5-7-9-9-14 0-2 3-2 7 3L4 6c0-3 3-3 4 0l4 9V3c0-3 4-3 4 0l1 12 3-11c1-3 4-2 4 1l-3 12 5-9c2-2 4-1 3 2-4 8-3 14-7 20z" fill="#fff" stroke="#555" strokeWidth="1.5" />
        </NavIcon>
        <NavIcon label="Zoom">
            <Lens />
            <path d="M24 5h8M28 1v8M24 12h8" stroke="#444" strokeWidth="1.5" />
        </NavIcon>
        <NavIcon label="Ajustar" caretGap="gap-2.5">
            <path d="M1 1h30v30H1z" stroke="#777" strokeDasharray="4 3" />
            <Lens />
        </NavIcon>
        <NavIcon label="Configuración de visualización" caretGap="gap-1">
            <path d="M1 1h30v24H1z" fill="#f4f4f4" stroke="#444" strokeWidth="1.5" />
            <path d="M4 4h24v17H4z" fill="#a4c3ec" stroke="#3d5a86" />
            <path d="M12 25h8v4h4v2H8v-2h4z" fill="#ddd" stroke="#555" />
        </NavIcon>
        <NavIcon label="Rejilla y ajustes" caretGap="gap-1">
            <path d="M1 1h29v30H1z" fill="#f0f0f4" />
            <path d="M8 16h22v15H8z" fill="#c6c8d2" />
            <path d="M1 1h29v30H1zM6 1v30M11 1v30M16 1v30M21 1v30M26 1v30M1 6h29M1 11h29M1 16h29M1 21h29M1 26h29" stroke="#4c4c4c" />
        </NavIcon>
        <NavIcon label="Ventanas gráficas" caretGap="gap-1">
            <path d="M1 4h29v25H1z" fill="#9cbce6" stroke="#3a649e" strokeWidth="1.5" />
            <path d="M16 4v25M1 16h29" stroke="#3a649e" strokeWidth="1.5" />
        </NavIcon>
    </div>
);

const Viewport = () => (
    <main className="relative flex-1 overflow-hidden bg-[#fefefe]">
        <svg className="absolute inset-0 h-full w-full" viewBox="0 228 2886 1772" preserveAspectRatio="xMidYMid slice" fill="none" role="img" aria-label="Modelo 3D">
            <Ground />
            <Model />
            <ViewCube />
        </svg>
        <Browser />
        <div className="absolute bottom-2 left-0 flex h-[50px] w-[273px] items-center justify-end border-r-2 border-b-2 border-[#cfcfcf] bg-[#f2f2f2] pr-[21px]">
            <button aria-label="Comentarios"><RoundToggle plus /></button>
        </div>
        <NavBar />
    </main>
);

const FEATURES: Record<string, React.FC<IconProps>> = {
    S: SketchIcon,
    E: ExtrudeIcon,
    N: BodyIcon,
    M: MoveIcon,
    F: FilletIcon,
    T: ThreadIcon
};

const HISTORY = "SESESNESESSSNESEMMSESESEMMMSNEMSESESESEMMMFTTTT".split("");

const Timeline = () => (
    <footer className="flex items-start overflow-hidden border-t-4 border-[#d0d0d0] bg-[#f2f2f2] pb-3">
        <ol className="-ml-0.5 flex pt-8">
            {HISTORY.map((kind, i) => {
                const Icon = FEATURES[kind];
                return (
                    <li key={i} className="group flex w-12 flex-col items-center">
                        <button aria-label={`Operación ${i + 1}`}>
                            <Icon className="h-8 w-8" />
                        </button>
                        <span className="mt-1.5 h-2.5 w-[3px] bg-[#d0d0d0]" />
                        <span className="h-1 w-full self-start bg-[#d0d0d0] group-last:w-[26px]" />
                    </li>
                );
            })}
        </ol>
        <svg className="-ml-3 mt-5 h-16 w-6 shrink-0" viewBox="0 0 24 64" fill="#6b6b6b" aria-hidden="true">
            <path d="M0 0h24v9l-10 9v46h-3V18L0 9z" />
        </svg>
    </footer>
);

export default function App() {
    return (
        <div className="flex min-h-screen flex-col overflow-hidden bg-[#f2f2f2] font-['Open_Sans','Noto_Sans',sans-serif] text-[22px] text-[#3c3c3c]">
            <TabStrip />
            <MenuTabs />
            <Toolbar />
            <Viewport />
            <Timeline />
        </div>
    );
}
